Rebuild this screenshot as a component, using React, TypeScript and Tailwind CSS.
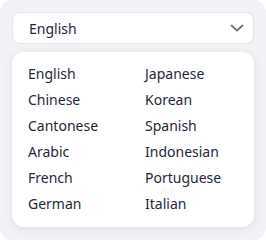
const left = ["English", "Chinese", "Cantonese", "Arabic", "French", "German"];
const right = ["Japanese", "Korean", "Spanish", "Indonesian", "Portuguese", "Italian"];

export default function App() {
  return (
    <div className="h-[240px] w-[266px] rounded-[12px] bg-[#f1f2f5] p-3 font-['Noto_Sans',sans-serif]">
      <div className="flex h-[32px] items-center justify-between rounded-[8px] border border-[#e3e5ea] bg-white pl-4 pr-[9px]">
        <span className="text-[14px] text-[#1f2937]">English</span>
        <svg width="14" height="8" viewBox="0 0 14 8" fill="none" className="text-[#6b7280]">
          <path
            d="M1.5 1.5L7 6.5L12.5 1.5"
            stroke="currentColor"
            strokeWidth="1.8"
            strokeLinecap="round"
            strokeLinejoin="round"
          />
        </svg>
      </div>
      <div className="mt-[8px] grid grid-cols-[117px_1fr] rounded-[12px] bg-white px-4 pb-[10px] pt-[9px] shadow-[0_2px_10px_rgba(0,0,0,0.08)]">
        {left.map((l, i) => (
          <div key={l} className="contents">
            <span className="text-[14px] leading-[26px] text-[#1f2937]">{l}</span>
            <span className="text-[14px] leading-[26px] text-[#1f2937]">{right[i]}</span>
          </div>
        ))}
      </div>
    </div>
  );
}
